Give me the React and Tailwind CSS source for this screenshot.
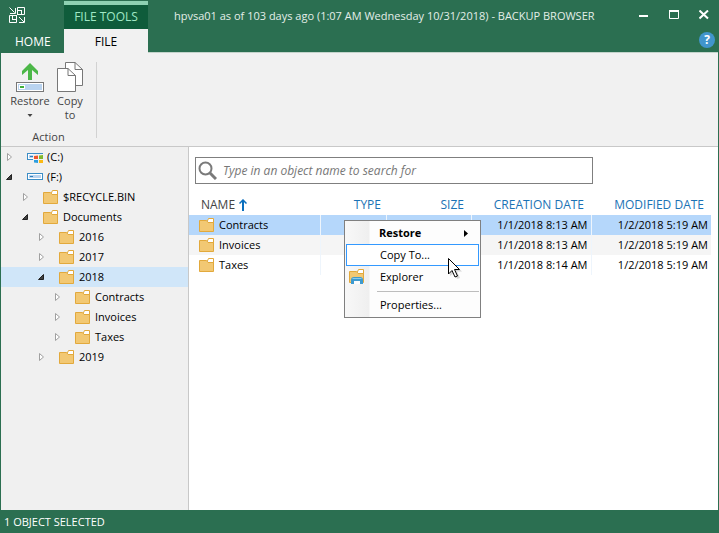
import React, { useState } from 'react';

const TREE = [
  { id: 'c', label: '(C:)', level: 0, icon: 'system' },
  { id: 'f', label: '(F:)', level: 0, icon: 'drive', open: true },
  { id: 'bin', label: '$RECYCLE.BIN', level: 1 },
  { id: 'docs', label: 'Documents', level: 1, open: true },
  { id: '2016', label: '2016', level: 2 },
  { id: '2017', label: '2017', level: 2 },
  { id: '2018', label: '2018', level: 2, open: true },
  { id: 'contracts', label: 'Contracts', level: 3 },
  { id: 'invoices', label: 'Invoices', level: 3 },
  { id: 'taxes', label: 'Taxes', level: 3 },
  { id: '2019', label: '2019', level: 2 },
];

const INDENT = ['pl-1', 'pl-5', 'pl-9', 'pl-13'];

const FILES = [
  { name: 'Contracts', created: '1/1/2018 8:13 AM', modified: '1/2/2018 5:19 AM' },
  { name: 'Invoices', created: '1/1/2018 8:13 AM', modified: '1/2/2018 5:19 AM' },
  { name: 'Taxes', created: '1/1/2018 8:14 AM', modified: '1/2/2018 5:19 AM' },
];

const ROW_COLORS = ['bg-[#b5d7fb]', 'bg-[#f5f5f5]', 'bg-white'];

function FolderIcon() {
  return (
    <svg width="16" height="14" viewBox="0 0 16 14" className="shrink-0" aria-hidden="true">
      <path d="M7.5 5 L9.5 .5 H14.5 V6 H7.5 Z" fill="#fff" stroke="#e2a93c" />
      <path d="M.5 2.5 H7.5 L9 4.5 H14.5 V13.5 H.5 Z" fill="#f2c873" stroke="#e2a93c" />
    </svg>
  );
}

function DriveIcon({ system }) {
  return (
    <svg width="17" height="12" viewBox="0 0 17 12" className="shrink-0" aria-hidden="true">
      <rect x=".5" y="2.5" width="15" height="6" fill="#fff" stroke="#3c8dc5" />
      <rect x="2" y="4" width="12" height="3" fill="#b9d3ef" />
      <rect x="3" y="5" width="3" height="1" fill="#2c7fbc" />
      {system && (
        <g>
          <rect x="6" y="3" width="11" height="9" fill="#f0f0f0" />
          <path d="M6 2.5 H15.5" stroke="#3c8dc5" />
          <path d="M7 5 L11 4.5 V8 H7 Z" fill="#f0552a" />
          <path d="M12 4.5 L16 4 V8 H12 Z" fill="#7fb82c" />
          <path d="M7 9 H11 V12 L7 11.5 Z" fill="#2b9de0" />
          <path d="M12 9 H16 V12 H12 Z" fill="#fbb913" />
        </g>
      )}
    </svg>
  );
}

function ExplorerIcon() {
  return (
    <svg width="16" height="16" viewBox="0 0 16 16" aria-hidden="true">
      <path d="M7.5 5 L9.5 .5 H14.5 V6 H7.5 Z" fill="#fff" stroke="#e2a93c" />
      <path d="M.5 2.5 H7.5 L9 4.5 H14.5 V13.5 H.5 Z" fill="#f2c873" stroke="#e2a93c" />
      <path d="M2 15 V11 Q2 8 5 8 H11 Q14 8 14 11 V15 H11 V12 H5 V15 Z" fill="#3d9ad0" />
      <path d="M3.5 9.5 H12.5" stroke="#8fcbea" />
      <rect x="5" y="12" width="6" height="3" fill="#fdfdfd" />
    </svg>
  );
}

function Expander({ open }) {
  return (
    <svg width="10" height="10" viewBox="0 0 10 10" className="shrink-0" aria-hidden="true">
      {open ? (
        <path d="M6.5 2.5 V7.5 H1.5 Z" fill="#404040" stroke="#222" />
      ) : (
        <path d="M2.5 1.5 V8.5 L6.5 5 Z" fill="#fff" stroke="#a0a0a0" />
      )}
    </svg>
  );
}

function TitleBar() {
  return (
    <header className="flex h-[53px] bg-[#2b6f51] text-white">
      <div className="flex w-[63px] flex-col">
        <svg width="17" height="17" viewBox="0 0 17 17" className="mt-[7px] ml-2" fill="none" stroke="#fff" aria-hidden="true">
          <path d="M.5 .5 L5.5 5.5 M6.5 1 V6.5 H1" />
          <path d="M8.5 3 V.5 H15.5 V7.5 H13" />
          <rect x="8.5" y="3.500" width="4" height="4" />
          <path d="M3 8.500 H.5 V15.500 H7.500 V13" />
          <rect x="3.500" y="8.500" width="4" height="4" />
          <path d="M10 10 L15 15 M15.500 10 V15.500 H10" />
        </svg>
        <button type="button" className="mt-[9px] ml-[14px] h-[18px] text-left text-[12px]">HOME</button>
      </div>
      <div className="flex w-[84px] flex-col pt-px">
        <div className="flex h-7 items-center justify-center border-t-4 border-[#8ed1b2] bg-[#0f5c3b] text-[12px] text-[#a0e8c6]">
          FILE TOOLS
        </div>
        <button type="button" className="flex-1 bg-[#f1f1f1] pt-px text-[12px] text-black">FILE</button>
      </div>
      <div className="flex min-w-0 flex-1 flex-col border-b border-[#c4d4cc]">
        <div className="flex h-8 items-center">
          <h1 className="min-w-0 flex-1 truncate pl-[26px] text-[11px] text-[#e3eee8]">
            hpvsa01 as of 103 days ago (1:07 AM Wednesday 10/31/2018) - BACKUP BROWSER
          </h1>
          <div className="flex items-center gap-5 pr-[9px]">
            <button type="button" aria-label="Minimize">
              <svg width="10" height="12" viewBox="0 0 10 12" className="block"><path d="M0 6 H9" stroke="#fff" strokeWidth="2" /></svg>
            </button>
            <button type="button" aria-label="Maximize">
              <svg width="10" height="12" viewBox="0 0 10 12" className="block"><path d="M0 1 H10" stroke="#fff" strokeWidth="2" /><path d="M.5 1 V8.5 H9.5 V1" fill="none" stroke="#fff" /></svg>
            </button>
            <button type="button" aria-label="Close">
              <svg width="10" height="12" viewBox="0 0 10 12" className="block"><path d="M.5 .5 L9 8.5 M9 .5 L.5 8.5" stroke="#fff" strokeWidth="2" /></svg>
            </button>
          </div>
        </div>
        <button type="button" aria-label="Help" className="mr-[3px] flex size-4 items-center justify-center self-end rounded-full bg-[#4195cc] text-[12px] font-bold">?</button>
      </div>
    </header>
  );
}

function Ribbon() {
  return (
    <div className="flex h-[94px] items-start border-b border-[#c8c8c8] bg-[#f1f1f1] pt-[9px] text-[#444]">
      <div className="flex w-[95px] flex-col">
        <div className="flex items-start pl-[9px]">
          <button type="button" className="flex w-10 flex-col items-center">
            <svg width="28" height="32" viewBox="0 0 28 32" aria-hidden="true">
              <path d="M14 1 L22 9 V13 L16 8 V18 H12 V8 L6 13 V9 Z" fill="#4cb748" />
              <rect x=".5" y="20.5" width="27" height="9" fill="#fff" stroke="#777" />
              <rect x="2" y="22" width="24" height="6" fill="#b9d3ef" />
              <rect x="3" y="23" width="6" height="4" fill="#fff" />
              <rect x="4" y="24" width="4" height="2" fill="#3fae3b" />
            </svg>
            <span className="text-[11px] leading-[14px]">Restore</span>
            <svg width="6" height="14" viewBox="0 0 6 14" aria-hidden="true"><path d="M.5 6 H5.5 L3 9 Z" fill="#444" /></svg>
          </button>
          <button type="button" className="flex w-10 flex-col items-center">
            <svg width="26" height="32" viewBox="0 0 26 32" fill="#fff" stroke="#777" aria-hidden="true">
              <path d="M8.5 .5 H18 L25.5 7.5 V23.5 H8.5 Z" />
              <path d="M18 .5 V7.5 H25.5" fill="none" />
              <path d="M.5 6.5 H11 L18.5 13.5 V29.5 H.5 Z" />
              <path d="M11 6.5 V13.5 H18.5" fill="none" />
            </svg>
            <span className="text-[11px] leading-[14px]">Copy<br />to</span>
          </button>
        </div>
        <div className="mt-2 text-center text-[11px] leading-[14px]">Action</div>
      </div>
      <div className="h-[76px] w-px bg-[#d2d2d2]" />
    </div>
  );
}

function FolderTree() {
  const [selected, setSelected] = useState('2018');

  return (
    <nav className="w-[188px] shrink-0 border-r border-[#c8c8c8] bg-[#f0f0f0]">
      {TREE.map((node) => (
        <button
          key={node.id}
          type="button"
          onClick={() => setSelected(node.id)}
          className={`flex h-5 w-full items-center ${INDENT[node.level]} ${selected === node.id ? 'bg-[#d0e6f9]' : ''}`}
        >
          <Expander open={node.open} />
          <span className="ml-3 flex w-5 shrink-0">
            {node.icon ? <DriveIcon system={node.icon === 'system'} /> : <FolderIcon />}
          </span>
          <span>{node.label}</span>
        </button>
      ))}
    </nav>
  );
}

function ContextMenu() {
  return (
    <div role="menu" className="absolute top-[73px] left-[155px] w-[137px] border border-[#808080] bg-[#fdfdfd] bg-linear-to-r from-[#f8f8f8] from-0% via-[#efefef] via-[24px] to-[#fdfdfd] to-[25px] p-px">
      <button type="button" role="menuitem" className="flex h-[22px] w-full items-center justify-between pr-[11px] pl-[33px] font-bold">
        Restore
        <svg width="4" height="7" viewBox="0 0 4 7" aria-hidden="true"><path d="M0 0 L4 3.5 L0 7 Z" /></svg>
      </button>
      <button type="button" role="menuitem" className="flex h-[22px] w-full items-center border border-[#3399ff] bg-white pl-[33px]">
        Copy To...
      </button>
      <button type="button" role="menuitem" className="flex h-[22px] w-full items-center pl-[3px]">
        <span className="w-[31px]"><ExplorerIcon /></span>
        Explorer
      </button>
      <div className="mt-[3px] mb-[2px] ml-[31px] h-px bg-[#bdbdbd]" />
      <button type="button" role="menuitem" className="flex h-[22px] w-full items-center pl-[34px]">
        Properties...
      </button>
      <svg width="18" height="24" viewBox="0 0 18 24" className="absolute top-[36px] left-[102px]" aria-hidden="true">
        <path d="M3 3 V19 L7 16 L10 22 L13 21 L10 14.5 H15 Z" fill="#000" opacity=".15" />
        <path d="M1.5 1.5 V17 L5 13.5 L8 20 L10.5 19 L7.5 12.5 H12.5 Z" fill="#fff" stroke="#000" />
      </svg>
    </div>
  );
}

function FileList() {
  const [query, setQuery] = useState('');

  return (
    <main className="relative min-w-0 flex-1 bg-white">
      <div className="mt-[10px] mr-[125px] ml-[6px] flex h-[27px] items-center border border-[#7f7f7f] pl-[2px]">
        <svg width="19" height="19" viewBox="0 0 19 19" fill="none" stroke="#7a7a7a" aria-hidden="true">
          <circle cx="7.5" cy="7.5" r="6" strokeWidth="2" />
          <path d="M12 12 L18 18" strokeWidth="3" />
        </svg>
        <input
          type="text"
          aria-label="Search"
          value={query}
          onChange={(e) => setQuery(e.target.value)}
          placeholder="Type in an object name to search for"
          className="h-full min-w-0 flex-1 pl-[6px] text-[12px] italic outline-none placeholder:text-[#777]"
        />
      </div>
      <table className="mt-[11px] w-full table-fixed border-collapse">
        <colgroup>
          <col />
          <col className="w-[66px]" />
          <col className="w-[85px]" />
          <col className="w-[120px]" />
          <col className="w-[120px]" />
          <col className="w-[7px]" />
        </colgroup>
        <thead>
          <tr className="h-5 text-[12px] text-[#1b72b5]">
            <th scope="col" className="p-0 pl-3 text-left font-normal text-[#444]">
              <span className="flex items-center gap-1">
                NAME
                <svg width="8" height="12" viewBox="0 0 8 12" fill="none" stroke="#0a6ebd" aria-hidden="true">
                  <path d="M4 12 V1" strokeWidth="2" />
                  <path d="M.5 4.5 L4 1 L7.5 4.5" strokeWidth="1.5" />
                </svg>
              </span>
            </th>
            <th scope="col" className="p-0 pr-[5px] text-right font-normal">TYPE</th>
            <th scope="col" className="p-0 pr-[7px] text-right font-normal">SIZE</th>
            <th scope="col" className="p-0 pr-[7px] text-right font-normal whitespace-nowrap">CREATION DATE</th>
            <th scope="col" className="p-0 pr-[7px] text-right font-normal whitespace-nowrap">MODIFIED DATE</th>
            <td />
          </tr>
        </thead>
        <tbody>
          {FILES.map((file, i) => (
            <tr key={file.name} className="h-5">
              <td className={`border-r border-[#eef5fc] p-0 pl-[10px] ${ROW_COLORS[i]}`}>
                <span className="flex items-center gap-1"><FolderIcon />{file.name}</span>
              </td>
              <td className={`border-r border-[#eef5fc] p-0 ${ROW_COLORS[i]}`} />
              <td className={`border-r border-[#eef5fc] p-0 ${ROW_COLORS[i]}`} />
              <td className={`border-r border-[#eef5fc] p-0 pr-[3px] text-right whitespace-nowrap ${ROW_COLORS[i]}`}>{file.created}</td>
              <td className={`p-0 pr-[3px] text-right whitespace-nowrap ${ROW_COLORS[i]}`}>{file.modified}</td>
              <td className="p-0" />
            </tr>
          ))}
        </tbody>
      </table>
      <ContextMenu />
    </main>
  );
}

export default function App() {
  return (
    <div className="flex min-h-screen flex-col border-x border-[#2b6f51] bg-[#f0f0f0] font-['Open_Sans',sans-serif] text-[11px] leading-4 text-black">
      <TitleBar />
      <Ribbon />
      <div className="flex flex-1">
        <FolderTree />
        <FileList />
      </div>
      <footer className="flex h-[23px] items-center bg-[#2b6f51] pl-[3px] text-[11px] text-white">
        1 OBJECT SELECTED
      </footer>
    </div>
  );
}
